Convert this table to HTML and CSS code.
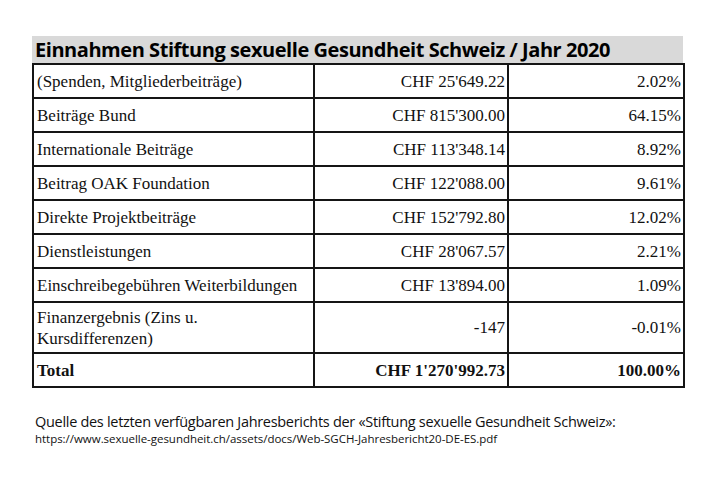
FILE: index.html
```html
<!DOCTYPE html>
<html lang="de">
<head>
<meta charset="utf-8">
<title>Einnahmen Stiftung sexuelle Gesundheit Schweiz</title>
<link rel="stylesheet" href="styles.css">
</head>
<body>
<div class="page">
  <div class="title">Einnahmen Stiftung sexuelle Gesundheit Schweiz / Jahr 2020</div>
  <table class="data">
    <colgroup>
      <col class="c1"><col class="c2"><col class="c3">
    </colgroup>
    <tbody>
      <tr><td>(Spenden, Mitgliederbeiträge)</td><td class="num">CHF 25'649.22</td><td class="num">2.02%</td></tr>
      <tr><td>Beiträge Bund</td><td class="num">CHF 815'300.00</td><td class="num">64.15%</td></tr>
      <tr><td>Internationale Beiträge</td><td class="num">CHF 113'348.14</td><td class="num">8.92%</td></tr>
      <tr><td>Beitrag OAK Foundation</td><td class="num">CHF 122'088.00</td><td class="num">9.61%</td></tr>
      <tr><td>Direkte Projektbeiträge</td><td class="num">CHF 152'792.80</td><td class="num">12.02%</td></tr>
      <tr><td>Dienstleistungen</td><td class="num">CHF 28'067.57</td><td class="num">2.21%</td></tr>
      <tr><td>Einschreibegebühren Weiterbildungen</td><td class="num">CHF 13'894.00</td><td class="num">1.09%</td></tr>
      <tr class="tall"><td>Finanzergebnis (Zins u.<br>Kursdifferenzen)</td><td class="num">-147</td><td class="num">-0.01%</td></tr>
      <tr class="total"><td>Total</td><td class="num">CHF 1'270'992.73</td><td class="num">100.00%</td></tr>
    </tbody>
  </table>
  <div class="source">
    <p class="source-label">Quelle des letzten verfügbaren Jahresberichts der «Stiftung sexuelle Gesundheit Schweiz»:</p>
    <p class="source-url">https://www.sexuelle-gesundheit.ch/assets/docs/Web-SGCH-Jahresbericht20-DE-ES.pdf</p>
  </div>
</div>
</body>
</html>
```

FILE: styles.css
```css
html, body {
  margin: 0;
  padding: 0;
  background: #ffffff;
}

.page {
  padding: 36px 0 0 32px;
  width: 651px;
  color: #111111;
}

.title {
  height: 27px;
  background: #d9d9d9;
  font-family: "Open Sans", "Noto Sans", sans-serif;
  font-weight: 700;
  font-size: 20px;
  letter-spacing: -0.45px;
  line-height: 28px;
  padding-left: 3px;
  color: #000000;
  white-space: nowrap;
}

.data {
  width: 651px;
  border-collapse: collapse;
  table-layout: fixed;
  font-family: "Liberation Serif", "Times New Roman", serif;
  font-size: 17px;
  color: #111111;
}

.c1 { width: 281px; }
.c2 { width: 194px; }
.c3 { width: 176px; }

.data td {
  border: 2px solid #151515;
  height: 32px;
  padding: 0 2px 0 3px;
  vertical-align: middle;
  line-height: 19px;
  white-space: nowrap;
}

.data td.num {
  text-align: right;
}

.data tr.tall td {
  height: 49px;
  line-height: 21px;
}

.data tr.total td {
  font-weight: 700;
}

.source {
  padding: 25px 0 0 3px;
  font-family: "Open Sans", "Noto Sans", sans-serif;
  color: #111111;
}

.source p {
  margin: 0;
  white-space: nowrap;
}

.source-label {
  font-size: 14.5px;
  letter-spacing: -0.3px;
  line-height: 18px;
}

.source-url {
  font-size: 11.5px;
  letter-spacing: -0.03px;
  line-height: 16px;
}
```
